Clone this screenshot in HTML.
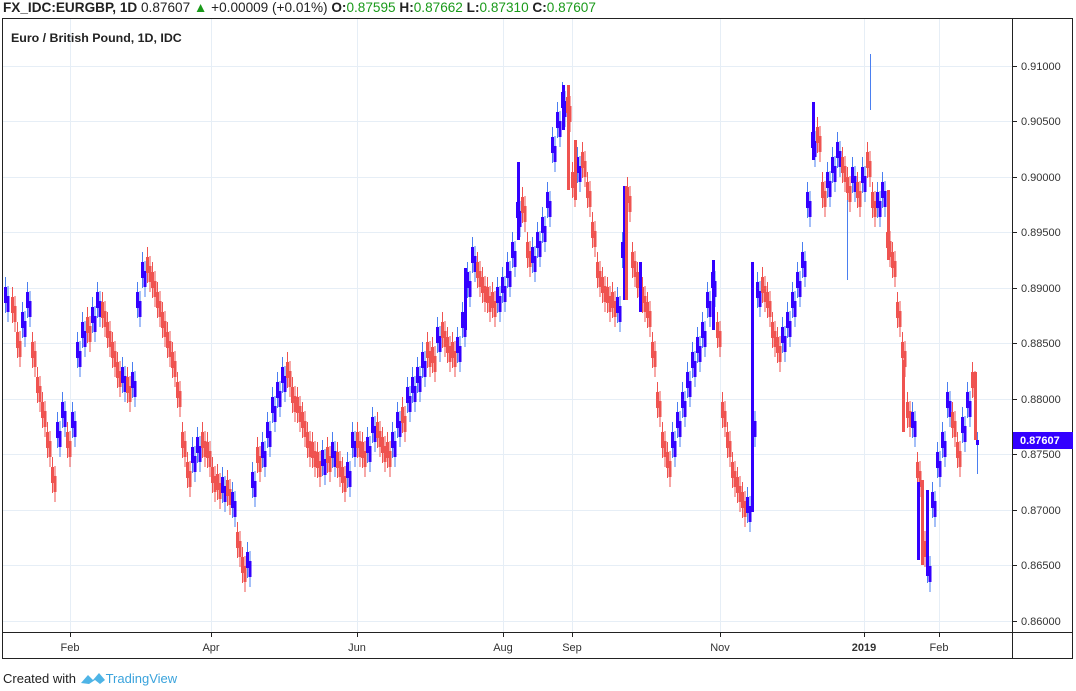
<!DOCTYPE html>
<html><head><meta charset="utf-8"><style>
body{margin:0;width:1076px;height:691px;background:#fff;font-family:"Liberation Sans",sans-serif;overflow:hidden;position:relative}
.t{position:absolute;white-space:nowrap}
</style></head><body>
<svg width="1076" height="691" style="position:absolute;left:0;top:0" font-family="Liberation Sans, sans-serif">
<g stroke="#e6eef6" stroke-width="1">
<path d="M70.5 19V632M211.5 19V632M357.5 19V632M503.5 19V632M572.5 19V632M720.5 19V632M864.5 19V632M939.5 19V632"/>
<path d="M3 66.5H1012M3 121.5H1012M3 177.5H1012M3 232.5H1012M3 288.5H1012M3 343.5H1012M3 399.5H1012M3 454.5H1012M3 510.5H1012M3 565.5H1012M3 621.5H1012"/>
</g>
<rect x="2.5" y="18.5" width="1070" height="640" fill="none" stroke="#222"/>
<path d="M1012.5 18V659M2 632.5H1073M70.5 632V637M211.5 632V637M357.5 632V637M503.5 632V637M572.5 632V637M720.5 632V637M864.5 632V637M939.5 632V637M1012 66.5h5M1012 121.5h5M1012 177.5h5M1012 232.5h5M1012 288.5h5M1012 343.5h5M1012 399.5h5M1012 454.5h5M1012 510.5h5M1012 565.5h5M1012 621.5h5" stroke="#222"/>
<g font-size="11" fill="#333">
<text x="1021" y="70">0.91000</text><text x="1021" y="125">0.90500</text><text x="1021" y="181">0.90000</text><text x="1021" y="236">0.89500</text><text x="1021" y="292">0.89000</text><text x="1021" y="347">0.88500</text><text x="1021" y="403">0.88000</text><text x="1021" y="458">0.87500</text><text x="1021" y="514">0.87000</text><text x="1021" y="569">0.86500</text><text x="1021" y="625">0.86000</text>
</g>
<g font-size="11" fill="#333" text-anchor="middle">
<text x="70" y="651">Feb</text><text x="211" y="651">Apr</text><text x="357" y="651">Jun</text><text x="503" y="651">Aug</text><text x="572" y="651">Sep</text><text x="720" y="651">Nov</text><text x="864" y="651" font-weight="bold">2019</text><text x="939" y="651">Feb</text>
</g>
<defs>
<g id="cd">
<path stroke="#4a7ff0" stroke-width="1" fill="none" d="M5.5 277V313M22.5 302V338M27.5 282V318M57.5 412V448M62.5 392V428M72.5 402V438M77.5 332V368M82.5 312V348M92.5 297V333M97.5 282V318M122.5 357V393M132.5 362V398M137.5 282V318M142.5 252V288M192.5 437V473M197.5 427V463M222.5 467V503M232.5 482V518M247.5 542V578M252.5 462V498M262.5 432V468M267.5 412V448M272.5 387V423M277.5 372V408M282.5 357V393M322.5 440V476M332.5 432V468M347.5 452V488M352.5 422V458M367.5 427V463M372.5 407V443M392.5 422V458M397.5 402V438M407.5 377V413M412.5 367V403M417.5 357V393M422.5 342V378M437.5 317V353M457.5 327V363M462.5 302V338M467.5 262V298M472.5 237V273M497.5 277V313M502.5 267V303M507.5 252V288M512.5 232V268M517.5 192V228M532.5 237V273M537.5 222V258M542.5 207V243M547.5 182V218M552.5 127V163M557.5 102V138M562.5 82V118M577.5 147V183M617.5 287V323M622.5 232V268M672.5 422V458M677.5 402V438M682.5 382V418M687.5 362V398M692.5 342V378M697.5 327V363M702.5 312V348M707.5 282V318M712.5 262V298M747.5 487V523M752.5 402V438M757.5 272V308M782.5 317V353M787.5 302V338M792.5 282V318M797.5 262V298M802.5 242V278M807.5 182V218M812.5 122V158M827.5 162V198M832.5 147V183M837.5 132V168M852.5 157V193M862.5 157V193M877.5 182V218M882.5 172V208M912.5 402V438M927.5 547V583M932.5 482V518M937.5 442V478M942.5 422V458M947.5 382V418M962.5 407V443M967.5 382V418"/>
<path stroke="#3300ff" stroke-width="3" fill="none" d="M5.5 287V303M22.5 312V328M27.5 292V308M57.5 422V438M62.5 402V418M72.5 412V428M77.5 342V358M82.5 322V338M92.5 307V323M97.5 292V308M122.5 367V383M132.5 372V388M137.5 292V308M142.5 262V278M192.5 447V463M197.5 437V453M222.5 477V493M232.5 492V508M247.5 552V568M252.5 472V488M262.5 442V458M267.5 422V438M272.5 397V413M277.5 382V398M282.5 367V383M322.5 450V466M332.5 442V458M347.5 462V478M352.5 432V448M367.5 437V453M372.5 417V433M392.5 432V448M397.5 412V428M407.5 387V403M412.5 377V393M417.5 367V383M422.5 352V368M437.5 327V343M457.5 337V353M462.5 312V328M467.5 272V288M472.5 247V263M497.5 287V303M502.5 277V293M507.5 262V278M512.5 242V258M517.5 202V218M532.5 247V263M537.5 232V248M542.5 217V233M547.5 192V208M552.5 137V153M557.5 112V128M562.5 92V108M577.5 157V173M617.5 297V313M622.5 242V258M672.5 432V448M677.5 412V428M682.5 392V408M687.5 372V388M692.5 352V368M697.5 337V353M702.5 322V338M707.5 292V308M712.5 272V288M747.5 497V513M752.5 412V428M757.5 282V298M782.5 327V343M787.5 312V328M792.5 292V308M797.5 272V288M802.5 252V268M807.5 192V208M812.5 132V148M827.5 172V188M832.5 157V173M837.5 142V158M852.5 167V183M862.5 167V183M877.5 192V208M882.5 182V198M912.5 412V428M927.5 557V573M932.5 492V508M937.5 452V468M942.5 432V448M947.5 392V408M962.5 417V433M967.5 392V408"/>
<path stroke="#ef5350" stroke-width="1" fill="none" d="M12.5 287V323M17.5 322V358M32.5 332V368M37.5 367V403M42.5 392V428M47.5 422V458M52.5 457V493M67.5 422V458M87.5 307V343M102.5 292V328M107.5 312V348M112.5 332V368M117.5 352V388M127.5 367V403M147.5 247V283M152.5 262V298M157.5 282V318M162.5 302V338M167.5 322V358M172.5 342V378M177.5 372V408M182.5 422V458M187.5 452V488M202.5 422V458M207.5 432V468M212.5 457V493M217.5 464V500M227.5 470V506M237.5 522V558M242.5 547V583M257.5 437V473M287.5 352V388M292.5 377V413M297.5 387V423M302.5 402V438M307.5 422V458M312.5 432V468M317.5 442V478M327.5 437V473M337.5 442V478M342.5 457V493M357.5 422V458M362.5 432V468M377.5 412V448M382.5 427V463M387.5 432V468M402.5 397V433M427.5 332V368M432.5 337V373M442.5 312V348M447.5 327V363M452.5 332V368M477.5 252V288M482.5 267V303M487.5 277V313M492.5 282V318M522.5 187V223M527.5 232V268M567.5 87V123M572.5 162V198M582.5 142V178M587.5 172V208M592.5 212V248M597.5 252V288M602.5 267V303M607.5 277V313M612.5 282V318M627.5 177V213M632.5 242V278M637.5 262V298M642.5 277V313M647.5 292V328M652.5 332V368M657.5 382V418M662.5 422V458M667.5 442V478M717.5 312V348M722.5 392V428M727.5 422V458M732.5 452V488M737.5 467V503M742.5 482V518M762.5 267V303M767.5 282V318M772.5 312V348M777.5 327V363M817.5 117V153M822.5 172V208M842.5 147V183M847.5 167V203M857.5 172V208M867.5 142V178M872.5 182V218M887.5 222V258M892.5 242V278M897.5 292V328M902.5 332V368M907.5 392V428M917.5 452V488M922.5 522V558M952.5 402V438M957.5 432V468M972.5 362V398"/>
<path stroke="#ef5350" stroke-width="3" fill="none" d="M12.5 297V313M17.5 332V348M32.5 342V358M37.5 377V393M42.5 402V418M47.5 432V448M52.5 467V483M67.5 432V448M87.5 317V333M102.5 302V318M107.5 322V338M112.5 342V358M117.5 362V378M127.5 377V393M147.5 257V273M152.5 272V288M157.5 292V308M162.5 312V328M167.5 332V348M172.5 352V368M177.5 382V398M182.5 432V448M187.5 462V478M202.5 432V448M207.5 442V458M212.5 467V483M217.5 474V490M227.5 480V496M237.5 532V548M242.5 557V573M257.5 447V463M287.5 362V378M292.5 387V403M297.5 397V413M302.5 412V428M307.5 432V448M312.5 442V458M317.5 452V468M327.5 447V463M337.5 452V468M342.5 467V483M357.5 432V448M362.5 442V458M377.5 422V438M382.5 437V453M387.5 442V458M402.5 407V423M427.5 342V358M432.5 347V363M442.5 322V338M447.5 337V353M452.5 342V358M477.5 262V278M482.5 277V293M487.5 287V303M492.5 292V308M522.5 197V213M527.5 242V258M567.5 97V113M572.5 172V188M582.5 152V168M587.5 182V198M592.5 222V238M597.5 262V278M602.5 277V293M607.5 287V303M612.5 292V308M627.5 187V203M632.5 252V268M637.5 272V288M642.5 287V303M647.5 302V318M652.5 342V358M657.5 392V408M662.5 432V448M667.5 452V468M717.5 322V338M722.5 402V418M727.5 432V448M732.5 462V478M737.5 477V493M742.5 492V508M762.5 277V293M767.5 292V308M772.5 322V338M777.5 337V353M817.5 127V143M822.5 182V198M842.5 157V173M847.5 177V193M857.5 182V198M867.5 152V168M872.5 192V208M887.5 232V248M892.5 252V268M897.5 302V318M902.5 342V358M907.5 402V418M917.5 462V478M922.5 532V548M952.5 412V428M957.5 442V458M972.5 372V388"/>
</g>
</defs>
<use href="#cd" transform="translate(2.5,9)"/>
<use href="#cd"/>
<!-- big bars -->
<path stroke="#3300ff" stroke-width="3" fill="none" d="M752.5 262V512M927.5 490V576M465.5 268V330M713.5 260V330M918.5 482V560M624.5 186V300M518.5 162V240M563.5 85V130M813.5 102V160M640.5 262V312"/>
<path stroke="#ef5350" stroke-width="3" fill="none" d="M626.5 186V300M568.5 85V190M888.5 190V260M903.5 360V432M975.5 372V440M922.5 480V565M575.5 140V200"/>
<path stroke="#4a7ff0" stroke-width="1" d="M977.5 432V474M870.5 54V110M847.5 200V280"/>
<path stroke="#3300ff" stroke-width="3" d="M977.5 440V445"/>
<rect x="1013" y="432" width="60" height="17" fill="#3300ff"/>
<text x="1020" y="444" font-size="11" font-weight="bold" fill="#fff">0.87607</text>
</svg>
<div class="t" style="left:3px;top:0px;font-size:13.6px;color:#222"><b>FX_IDC:EURGBP, 1D</b> 0.87607 <span style="color:#1a9a1a">▲</span> +0.00009 (+0.01%) <b>O:</b><span style="color:#1a9a1a">0.87595</span> <b>H:</b><span style="color:#1a9a1a">0.87662</span> <b>L:</b><span style="color:#1a9a1a">0.87310</span> <b>C:</b><span style="color:#1a9a1a">0.87607</span></div>
<div class="t" style="left:11px;top:31px;font-size:12.4px;color:#222;font-weight:bold">Euro / British Pound, 1D, IDC</div>
<div class="t" style="left:3px;top:671px;font-size:13px;color:#222">Created with <svg width="26" height="14" viewBox="0 0 26 14" style="vertical-align:-2px"><path d="M1 12 L8 4 L13 9 L19 2 L25 9 L20 13 L15 9 L9 13 Z" fill="#4eb4e6"/></svg><span style="color:#3aa3dc">TradingView</span></div>
</body></html>
